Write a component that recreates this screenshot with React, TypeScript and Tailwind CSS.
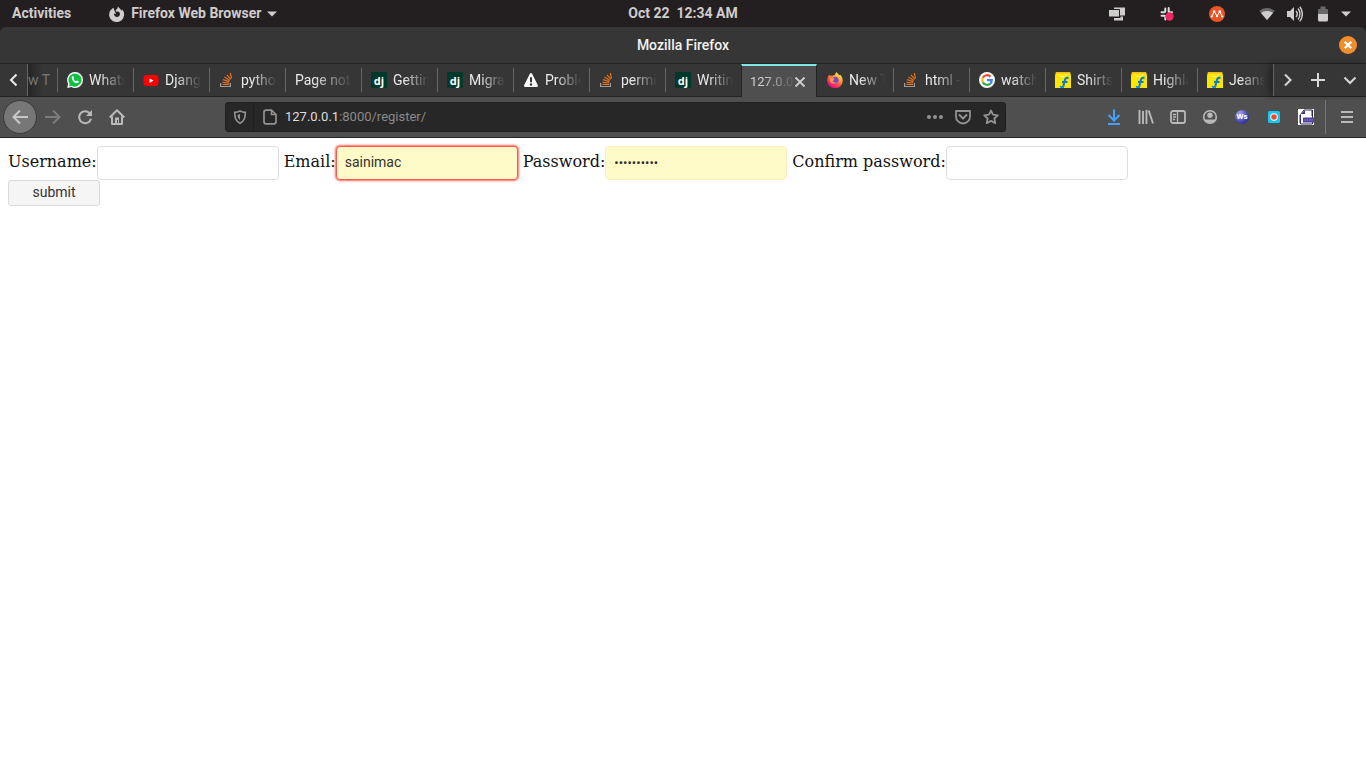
import { ReactNode } from "react";

type IconProps = { children: ReactNode; size?: 16 | 18 | 20; className?: string };

function Icon({ children, size = 16, className = "" }: IconProps) {
  return (
    <svg width={size} height={size} viewBox={`0 0 ${size} ${size}`} fill="none" className={`shrink-0 ${className}`} aria-hidden="true">
      {children}
    </svg>
  );
}

const WhatsApp = () => (
  <Icon>
    <path d="M8 0a8 8 0 0 1 0 16 8 8 0 0 1-3.700-.9L.2 16l.9-4.100A8 8 0 0 1 8 0Z" fill="#fff" />
    <path d="M8 1.400a6.600 6.600 0 1 1-3.400 12.300L2 14.300l.6-2.600A6.600 6.600 0 0 1 8 1.400Z" fill="#0fc143" />
    <path d="M5.300 4.300c.4-.4.900-.3 1.100.1l.6 1.400c.1.300-.5.900-.5 1.100.5 1.100 1.300 1.900 2.500 2.400.3.100.8-.9 1.100-.8l1.500.7c.3.200 0 1.200-.4 1.500-1.300.9-3.200.1-4.700-1.200C4.900 8 4.100 5.500 5.300 4.300Z" fill="#fff" />
  </Icon>
);
const YouTube = () => (
  <Icon>
    <rect x="0.500" y="3" width="15" height="11" rx="3" fill="#f00" />
    <path d="m6.500 6.500 4 2-4 2.500Z" fill="#fff" />
  </Icon>
);
const StackOverflow = () => (
  <Icon>
    <path d="M1.600 11v3.500h9.800V11" stroke="#9a9b9d" strokeWidth="1.200" />
    <path d="M3.500 12.500h6.500M3.500 10.300l6.600.7M4 7.600l6.300 2M5.500 5l5.300 3.400M8 2.800l3.800 4.600M11.300 1l1.200 5.300" stroke="#e8711c" strokeWidth="1.200" />
  </Icon>
);
const Django = () => (
  <span className="flex size-4 shrink-0 items-center justify-center bg-[#00382c] font-['Open_Sans',sans-serif] text-[11px] leading-none font-bold text-white">dj</span>
);
const Warning = () => (
  <Icon>
    <path d="M7 1.500 1.200 13c-.5 1 0 2 1 2h11.500c1 0 1.500-1 1-2L9 1.500c-.4-.8-1.600-.8-2 0Z" fill="#f9f9fa" />
    <path d="M8 6v3.500" stroke="#363636" strokeWidth="2" strokeLinecap="round" />
    <circle cx="8" cy="12.500" r="1.200" fill="#363636" />
  </Icon>
);
const Firefox = () => (
  <Icon>
    <defs>
      <linearGradient id="flame" x1="13" y1="1" x2="4" y2="15" gradientUnits="userSpaceOnUse">
        <stop stopColor="#fff44f" />
        <stop offset=".35" stopColor="#ffa52a" />
        <stop offset=".7" stopColor="#ff4255" />
        <stop offset="1" stopColor="#d60f85" />
      </linearGradient>
    </defs>
    <path d="M9.400 0c1 1.300 2.200 2 3 3.300l.8-.5c1.500 1.500 2.600 3.600 2.500 6A7.700 7.700 0 0 1 .3 8.500C.2 6 1 4.300 2.300 2.800l.7 1.500 1-1.400.8 1.300C6.200 3.200 7.700 3.500 8 2.600Z" fill="url(#flame)" />
    <path d="M8.200 4.700c2 0 3.400 1.600 3.400 3.500s-1.600 3.300-3.500 3.300-3.400-1.400-3.300-3c.9.700 2.200.5 2.900-.4L5.500 7c.2-1.200 1.200-2.300 2.700-2.300Z" fill="#7048dc" />
    <path d="M2.500 6.500c2-.9 3.500-.2 5 .3 0 1.300-1.900 1.300-1.800 2.300.2 1.500 2.400 1.700 3.900.8-1 2-4.600 2.400-6.200.1Z" fill="#ff9640" />
  </Icon>
);
const Google = () => (
  <Icon>
    <circle cx="8" cy="8" r="8" fill="#fff" />
    <path d="M3.800 5.700A4.900 4.900 0 0 1 11.500 4.600" stroke="#ea4335" strokeWidth="2.200" />
    <path d="M3.900 10.500a5 5 0 0 1 0-5" stroke="#fbbc05" strokeWidth="2.200" />
    <path d="M11.300 11.700a4.900 4.900 0 0 1-7.400-1.300" stroke="#34a853" strokeWidth="2.200" />
    <path d="M8 8.100h4.800c0 1.500-.5 2.700-1.600 3.600" stroke="#4285f4" strokeWidth="2.200" />
  </Icon>
);
const Flipkart = () => (
  <Icon>
    <path d="M1 0h14l1 3.500V16H0V3.500Z" fill="#ffe500" />
    <path d="M1 0h14l.3 1.500H.7Z" fill="#f6bd16" />
    <path d="M4 2c.6 3.500 7.400 3.500 8 0" stroke="#fff9a8" strokeWidth="1" />
    <path d="M13.500 6c-3-.7-3.500 1-4 3.500L8 15.500M7 10h5.500" stroke="#047bd5" strokeWidth="2" />
    <path d="M4.500 14h5l-1 2h-3Z" fill="#128fe8" />
  </Icon>
);

type Tab = { label: string; icon?: () => ReactNode; active?: boolean };
const tabs: Tab[] = [
  { label: "WhatsApp", icon: WhatsApp },
  { label: "Django", icon: YouTube },
  { label: "python", icon: StackOverflow },
  { label: "Page not found" },
  { label: "Getting started", icon: Django },
  { label: "Migrations", icon: Django },
  { label: "Problem", icon: Warning },
  { label: "permission", icon: StackOverflow },
  { label: "Writing", icon: Django },
  { label: "127.0.0.1", active: true },
  { label: "New Tab", icon: Firefox },
  { label: "html -", icon: StackOverflow },
  { label: "watch", icon: Google },
  { label: "Shirts", icon: Flipkart },
  { label: "Highlander", icon: Flipkart },
  { label: "Jeans", icon: Flipkart },
];

const fade = "min-w-0 flex-1 overflow-hidden whitespace-nowrap [mask-image:linear-gradient(to_right,black_30%,transparent)]";

function TabItem({ tab, divided }: { tab: Tab; divided: boolean }) {
  const Glyph = tab.icon;
  if (tab.active) {
    return (
      <div className="-mb-px flex min-w-0 items-center border-x border-t-2 border-x-[#232323] border-t-[#80e5e4] bg-[#4f4f4f] px-2 text-[13px] text-[#d0d0d0]">
        <button className={`${fade} text-left`}>{tab.label}</button>
        <button aria-label="Close tab" className="-ml-1 shrink-0">
          <Icon><path d="m3.500 3.500 9 9m0-9-9 9" stroke="#cfcfcf" strokeWidth="1.800" /></Icon>
        </button>
      </div>
    );
  }
  return (
    <button className="flex min-w-0 items-center gap-1.5 pr-2 text-left">
      <span className={`mr-[3px] h-6 w-px shrink-0 ${divided ? "bg-[#666]" : ""}`} />
      {Glyph && <Glyph />}
      <span className={fade}>{tab.label}</span>
    </button>
  );
}

function TopBar() {
  return (
    <header className="flex h-[27px] items-center bg-[#231f20] px-3 text-[14px] font-bold text-[#cfcccc]">
      <div className="flex flex-1 items-center gap-[38px]">
        <button>Activities</button>
        <button className="flex items-center gap-1.5">
          <Icon>
            <path d="M3.300 2.400A7.500 7.500 0 1 0 13 3.300l-.6 1.400C11.500 2.900 10.300 2 8.800.5c.1 1.800-.8 2.600-2 3.500L7 6c1-.9 3-.5 3.700.8.900 1.900-.4 4.200-2.700 4.200-2 0-3.300-1.600-3-3.400l2.200.4L6 5.700l-.9-1.900-.6-2Z" fill="currentColor" />
          </Icon>
          <span>Firefox Web Browser</span>
          <svg width="10" height="6" viewBox="0 0 10 6" aria-hidden="true"><path d="M0 .5h10L5 5.500Z" fill="currentColor" /></svg>
        </button>
      </div>
      <button className="whitespace-pre">Oct 22  12:34 AM</button>
      <div className="flex flex-1 items-center justify-end">
        <Icon className="mr-[34px]">
          <path d="M5 1.500h11v8H5Z" fill="currentColor" />
          <path d="M-.5 3.500h11v7.500h-11Z" fill="currentColor" stroke="#231f20" />
          <path d="M5 12v2.500h9V10.500h-2.500V12Z" fill="currentColor" />
        </Icon>
        <Icon className="mr-[34px]">
          <path d="M6.300 2.500v3M9.700 2v4M2.500 6.300h3M2.500 9.700h3M6.300 10v3.500M11 6.300h2" stroke="#ddd" strokeWidth="2" strokeLinecap="round" />
          <circle cx="10.500" cy="10.500" r="4.200" fill="#ed2763" />
        </Icon>
        <Icon className="mr-[34px]">
          <circle cx="8" cy="8" r="8" fill="#eb5424" />
          <path d="m2.800 10.500 2.400-5L8 10l2.800-4.500 2.400 5" stroke="#fff" strokeWidth="1" />
          <g fill="#fff"><circle cx="2.800" cy="10.500" r="1.100" /><circle cx="5.200" cy="5.500" r="1.300" /><circle cx="8" cy="10" r="1.200" /><circle cx="10.800" cy="5.500" r="1.300" /><circle cx="13.200" cy="10.500" r="1.100" /></g>
        </Icon>
        <Icon className="mr-3">
          <path d="M.3 5c4-4 11.400-4 15.400 0L8 14Z" fill="#6b6869" />
          <path d="M2 7c3.300-2.800 8.700-2.800 12 0L8 14Z" fill="currentColor" />
        </Icon>
        <Icon className="mr-3">
          <path d="M0 5h3l4-4v14l-4-4H0Z" fill="currentColor" />
          <path d="M9 5c1.500 1.700 1.500 4.300 0 6M11 2.500c2.600 3 2.600 8 0 11M12.800.8c3.400 4 3.400 10.400 0 14.400" stroke="currentColor" strokeWidth="1.400" />
        </Icon>
        <Icon className="mr-2.5">
          <path d="M5.500.5h5V3H12a1 1 0 0 1 1 1v4H3V4a1 1 0 0 1 1-1h1.500Z" fill="#6b6869" />
          <path d="M3 8h10v6a1.500 1.500 0 0 1-1.500 1.500h-7A1.500 1.500 0 0 1 3 14Z" fill="currentColor" />
        </Icon>
        <svg width="10" height="6" viewBox="0 0 10 6" className="mr-[3px]" aria-hidden="true"><path d="M0 .5h10L5 5.500Z" fill="currentColor" /></svg>
      </div>
    </header>
  );
}

function TabStrip() {
  return (
    <nav className="flex h-[34px] border-y border-[#232323] bg-[#363636] text-[14px] text-[#e9e9e9]">
      <button aria-label="Scroll tabs left" className="flex w-7 items-center justify-center border-r border-[#666]">
        <Icon><path d="M10.500 2.500 5 8l5.500 5.500" stroke="#ececec" strokeWidth="2" /></Icon>
      </button>
      <button className="w-[29px] overflow-hidden bg-linear-to-r from-[#252525] to-[#363636] to-50% text-left whitespace-nowrap text-[#777]">
        w T
      </button>
      <div className="grid min-w-0 flex-1 grid-cols-16">
        {tabs.map((tab, i) => (
          <TabItem key={i} tab={tab} divided={!tabs[i - 1]?.active} />
        ))}
      </div>
      <div className="flex border-l border-[#666] shadow-[-4px_0_6px_rgba(0,0,0,0.35)]">
        <button aria-label="Scroll tabs right" className="flex w-7 items-center justify-center">
          <Icon><path d="M5 2.500 10.500 8 5 13.500" stroke="#d7d7d7" strokeWidth="2" /></Icon>
        </button>
        <button aria-label="New tab" className="flex w-8 items-center justify-center">
          <Icon><path d="M8 1v14M1 8h14" stroke="#d7d7d7" strokeWidth="2" /></Icon>
        </button>
        <button aria-label="List all tabs" className="flex w-8 items-center justify-center">
          <Icon><path d="M2.500 5.500 8 11l5.500-5.500" stroke="#d7d7d7" strokeWidth="2" /></Icon>
        </button>
      </div>
    </nav>
  );
}

function ToolButton({ label, children }: { label: string; children: ReactNode }) {
  return (
    <button aria-label={label} className="flex size-8 shrink-0 items-center justify-center">
      <Icon>{children}</Icon>
    </button>
  );
}

function Toolbar() {
  const line = "#b9b9b9";
  return (
    <div className="flex h-[41px] items-center border-b border-[#232323] bg-[#4f4f4f] pr-[3px] pl-[3px]">
      <button aria-label="Back" className="flex size-[34px] shrink-0 items-center justify-center rounded-full border border-[#3a3a3a] bg-[#777]">
        <Icon><path d="M16 8H1.500M8 1.500 1.500 8 8 14.500" stroke="#c8c8c8" strokeWidth="2" /></Icon>
      </button>
      <ToolButton label="Forward"><path d="M0 8h14.500M8 1.500 14.500 8 8 14.500" stroke="#7c7c7c" strokeWidth="2" /></ToolButton>
      <ToolButton label="Reload">
        <path d="M12.500 4A6 6 0 1 0 14 9.700" stroke={line} strokeWidth="2" />
        <path d="M15 1v6H9Z" fill={line} />
      </ToolButton>
      <ToolButton label="Home">
        <path d="M.7 8.500 8 1.200l7.300 7.300M3 7.500V15h10V7.500" stroke={line} strokeWidth="2" strokeLinejoin="round" />
        <path d="M6 14V8.500h4V14Z" fill={line} /><path d="M8.500 11V14" stroke="#4f4f4f" />
      </ToolButton>
      <div className="ml-[92px] flex h-[30px] min-w-0 flex-1 items-center rounded-[3px] border border-[#202020] bg-[#272727]">
        <button aria-label="Tracking protection" className="flex h-full w-7 shrink-0 items-center justify-center border-r border-[#1f1f1f]">
          <Icon>
            <path d="M8 2C6 3 4 3.300 2.700 3.300c0 5 .6 8.500 5.300 10.900 4.700-2.400 5.300-5.900 5.300-10.900C12 3.300 10 3 8 2Z" stroke="#929292" strokeWidth="1.700" />
            <path d="M8 5v6c-2-1.300-2.500-3-2.500-5.300C6.500 5.500 7.300 5.300 8 5Z" fill="#929292" />
          </Icon>
        </button>
        <button aria-label="Site information" className="flex w-[31px] shrink-0 items-center justify-center">
          <Icon>
            <path d="M9.500 1.200H4a2 2 0 0 0-2 2v9.600a2 2 0 0 0 2 2h8a2 2 0 0 0 2-2V5.500Z" stroke="#929292" strokeWidth="1.700" />
            <path d="M9.500 1.500v4H14" stroke="#929292" strokeWidth="1.500" />
          </Icon>
        </button>
        <div className="min-w-0 flex-1 truncate text-[13px] leading-5 text-[#8a8a8a]"><span className="text-[#dedede]">127.0.0.1</span>:8000/register/</div>
        <div className="flex shrink-0 items-center gap-3 pr-1.5">
          <button aria-label="Page actions"><Icon><g fill="#929292"><circle cx="2" cy="8" r="2" /><circle cx="8" cy="8" r="2" /><circle cx="14" cy="8" r="2" /></g></Icon></button>
          <button aria-label="Save to Pocket"><Icon><path d="M1 2h14v5.500a7 7 0 0 1-14 0Z" stroke="#929292" strokeWidth="1.800" strokeLinejoin="round" /><path d="m4.500 6 3.500 3.500L11.500 6" stroke="#929292" strokeWidth="2" strokeLinecap="round" /></Icon></button>
          <button aria-label="Bookmark"><Icon><path d="m8 1.500 2 4.200 4.800.6-3.500 3.200 1 4.700L8 11.900l-4.300 2.300 1-4.700L1.200 6.300 6 5.700Z" stroke="#929292" strokeWidth="1.800" strokeLinejoin="round" /></Icon></button>
        </div>
      </div>
      <div className="ml-[92px] flex items-center">
        <ToolButton label="Downloads"><path d="M8 .5V11M2.500 6 8 11.500 13.500 6M2 15h12" stroke="#45a1ff" strokeWidth="2" /></ToolButton>
        <ToolButton label="Library"><path d="M1.500 1v14M5 2v13M8.500 1v14M10.700 1.500 15 14.500" stroke={line} strokeWidth="1.900" /></ToolButton>
        <ToolButton label="Sidebar"><rect x="1" y="2" width="14" height="12" rx="2" stroke={line} strokeWidth="1.800" /><path d="M7.500 2v12M3 5.500h3M3 8h3M3 10.500h2" stroke={line} strokeWidth="1.300" /></ToolButton>
        <ToolButton label="Account"><circle cx="8" cy="8" r="6.300" stroke={line} strokeWidth="1.600" /><circle cx="8" cy="6.200" r="2.700" fill={line} /><path d="M2.500 10.500h11c-1.400 4.500-9.600 4.500-11 0Z" fill={line} /></ToolButton>
        <button aria-label="Web socket client" className="flex size-8 shrink-0 items-center justify-center">
          <span className="flex size-3.5 items-center justify-center rounded-full bg-radial-[at_35%_25%] from-[#a5a5e8] to-[#3434a0] to-70% text-[8px] leading-3 font-bold text-white">Ws</span>
        </button>
        <ToolButton label="Screen recorder"><rect x="2" y="2" width="12" height="12" rx="1.500" fill="#13c7f5" /><circle cx="8" cy="8" r="3.800" fill="#fff" /><circle cx="8" cy="8" r="2.800" fill="#ee4932" /></ToolButton>
        <ToolButton label="Save page">
          <path d="M0 0h16v16H0Z" fill="#fff" />
          <path d="M2.500 5.500 6 1h8.500v14h-12Z" fill="#fff" stroke="#312b54" />
          <path d="M3 5h4V1Z" fill="#453b84" /><path d="M14 1v6M2 6v8" stroke="#312b54" />
          <path d="M5 8.500h11v5H5Z" fill="#5140a2" /><path d="M7 10v2M9.500 10v2M12 10v2M14 10v2" stroke="#8175c6" />
        </ToolButton>
        <span className="mr-[5px] ml-[3px] h-[34px] w-px bg-[#777]" />
        <ToolButton label="Menu"><path d="M2 3h12M2 8h12M2 13h12" stroke={line} strokeWidth="2" /></ToolButton>
      </div>
    </div>
  );
}

const box = "h-[34px] w-[182px] rounded-[4px] border px-2 pb-0.5 font-[Roboto,sans-serif] outline-none";

function RegisterForm() {
  return (
    <main className="p-2">
      <form>
        <div className="flex flex-wrap gap-x-[5px]">
          <div className="flex items-center"><label htmlFor="username" className="pb-0.5">Username:</label><input id="username" type="text" className={`${box} border-[#dedede] bg-white text-[14px]`} /></div>
          <div className="flex items-center"><label htmlFor="email" className="pb-0.5">Email:</label><input id="email" type="text" defaultValue="sainimac" className={`${box} border-[#ff5c50] bg-[#fffbc8] text-[14px] text-[#35302c] shadow-[0_0_2px_1px_#ff6b60]`} /></div>
          <div className="flex items-center"><label htmlFor="password" className="pb-0.5">Password:</label><input id="password" type="password" defaultValue="saini12345" className={`${box} border-[#fcefbd] bg-[#fffbc8] text-[13px] text-[#35302c]`} /></div>
          <div className="flex items-center"><label htmlFor="confirm" className="pb-0.5">Confirm password:</label><input id="confirm" type="password" className={`${box} border-[#dedede] bg-white text-[14px]`} /></div>
        </div>
        <button type="button" className="block h-[26px] w-[92px] rounded-[3px] border border-[#dadada] bg-[#f5f5f5] pb-0.5 font-[Roboto,sans-serif] text-[14px] leading-5 text-[#333]">submit</button>
      </form>
    </main>
  );
}

export default function App() {
  return (
    <div className="min-h-screen bg-white font-[Roboto,sans-serif]">
      <TopBar />
      <div className="bg-[#231f20]">
        <div className="grid h-9 grid-cols-[1fr_auto_1fr] items-center rounded-t-md bg-[#363636] px-[9px] text-[14px] font-medium text-[#f2f2f2]">
          <h1 className="col-start-2">Mozilla Firefox</h1>
          <button aria-label="Close window" className="justify-self-end">
            <Icon size={18}><circle cx="9" cy="9" r="9" fill="#f28d2c" /><path d="m5.800 5.800 6.400 6.400m0-6.400-6.400 6.400" stroke="#fff" strokeWidth="2.300" /></Icon>
          </button>
        </div>
      </div>
      <TabStrip />
      <Toolbar />
      <div className="font-['DejaVu_Serif',serif] text-[16px] text-[#111]">
        <RegisterForm />
      </div>
    </div>
  );
}
